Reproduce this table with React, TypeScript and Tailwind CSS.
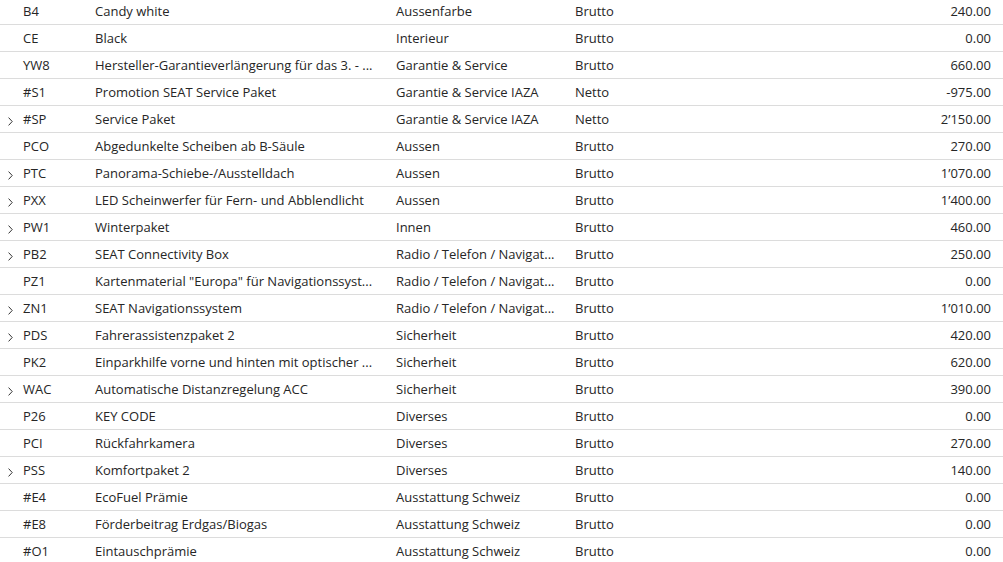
import React from 'react';

type Row = {
  code: string;
  name: string;
  group: string;
  kind: string;
  price: string;
  expandable?: boolean;
};

const rows: Row[] = [
  { code: 'B4', name: 'Candy white', group: 'Aussenfarbe', kind: 'Brutto', price: '240.00' },
  { code: 'CE', name: 'Black', group: 'Interieur', kind: 'Brutto', price: '0.00' },
  { code: 'YW8', name: 'Hersteller-Garantieverlängerung für das 3. - ...', group: 'Garantie & Service', kind: 'Brutto', price: '660.00' },
  { code: '#S1', name: 'Promotion SEAT Service Paket', group: 'Garantie & Service IAZA', kind: 'Netto', price: '-975.00' },
  { code: '#SP', name: 'Service Paket', group: 'Garantie & Service IAZA', kind: 'Netto', price: '2’150.00', expandable: true },
  { code: 'PCO', name: 'Abgedunkelte Scheiben ab B-Säule', group: 'Aussen', kind: 'Brutto', price: '270.00' },
  { code: 'PTC', name: 'Panorama-Schiebe-/Ausstelldach', group: 'Aussen', kind: 'Brutto', price: '1’070.00', expandable: true },
  { code: 'PXX', name: 'LED Scheinwerfer für Fern- und Abblendlicht', group: 'Aussen', kind: 'Brutto', price: '1’400.00', expandable: true },
  { code: 'PW1', name: 'Winterpaket', group: 'Innen', kind: 'Brutto', price: '460.00', expandable: true },
  { code: 'PB2', name: 'SEAT Connectivity Box', group: 'Radio / Telefon / Navigat...', kind: 'Brutto', price: '250.00', expandable: true },
  { code: 'PZ1', name: 'Kartenmaterial "Europa" für Navigationssyst...', group: 'Radio / Telefon / Navigat...', kind: 'Brutto', price: '0.00' },
  { code: 'ZN1', name: 'SEAT Navigationssystem', group: 'Radio / Telefon / Navigat...', kind: 'Brutto', price: '1’010.00', expandable: true },
  { code: 'PDS', name: 'Fahrerassistenzpaket 2', group: 'Sicherheit', kind: 'Brutto', price: '420.00', expandable: true },
  { code: 'PK2', name: 'Einparkhilfe vorne und hinten mit optischer ...', group: 'Sicherheit', kind: 'Brutto', price: '620.00' },
  { code: 'WAC', name: 'Automatische Distanzregelung ACC', group: 'Sicherheit', kind: 'Brutto', price: '390.00', expandable: true },
  { code: 'P26', name: 'KEY CODE', group: 'Diverses', kind: 'Brutto', price: '0.00' },
  { code: 'PCI', name: 'Rückfahrkamera', group: 'Diverses', kind: 'Brutto', price: '270.00' },
  { code: 'PSS', name: 'Komfortpaket 2', group: 'Diverses', kind: 'Brutto', price: '140.00', expandable: true },
  { code: '#E4', name: 'EcoFuel Prämie', group: 'Ausstattung Schweiz', kind: 'Brutto', price: '0.00' },
  { code: '#E8', name: 'Förderbeitrag Erdgas/Biogas', group: 'Ausstattung Schweiz', kind: 'Brutto', price: '0.00' },
  { code: '#O1', name: 'Eintauschprämie', group: 'Ausstattung Schweiz', kind: 'Brutto', price: '0.00' },
];

function Chevron() {
  return (
    <svg width="5" height="9" viewBox="0 0 5 9" className="text-[#333]">
      <polyline points="0.6,0.6 4.2,4.5 0.6,8.4" fill="none" stroke="currentColor" strokeWidth="1" />
    </svg>
  );
}

export default function App() {
  return (
    <div className="h-[562px] w-[1003px] overflow-hidden bg-white font-['Open_Sans',sans-serif] text-[13px] text-[#262626]">
      <div className="-mt-[2px]">
        {rows.map((r) => (
          <div
            key={r.code}
            className="grid h-[27px] grid-cols-[23px_72px_301px_179px_1fr_auto] items-center border-b border-[#dcdcdc] pr-[12px] pt-[2px]"
          >
            <div className="flex pl-[8px] pt-[2px]">{r.expandable && <Chevron />}</div>
            <div className="whitespace-nowrap">{r.code}</div>
            <div className="whitespace-nowrap">{r.name}</div>
            <div className="whitespace-nowrap">{r.group}</div>
            <div className="whitespace-nowrap">{r.kind}</div>
            <div className="whitespace-nowrap text-right">{r.price}</div>
          </div>
        ))}
      </div>
    </div>
  );
}
